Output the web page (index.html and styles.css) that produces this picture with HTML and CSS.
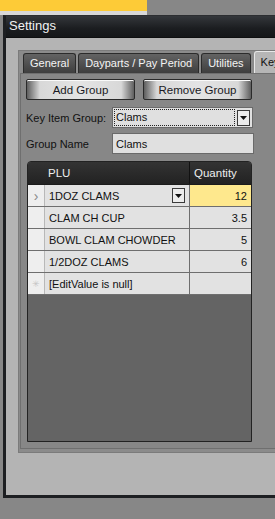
FILE: index.html
```html
<!DOCTYPE html>
<html lang="en">
<head>
    <meta charset="UTF-8">
    <title>Settings</title>
    <link rel="stylesheet" href="styles.css">
</head>
<body>
    <div class="topbar">
        <div class="topbar-yellow"></div>
    </div>

    <div class="window">
        <div class="title">Settings</div>
        <div class="window-body">
            <div class="tab-frame">
                <div class="tab-strip">
                    <div class="tab">General</div>
                    <div class="tab">Dayparts / Pay Period</div>
                    <div class="tab">Utilities</div>
                    <div class="tab active">Key Items</div>
                </div>
                <div class="tab-page">
                    <div class="button-row">
                        <button class="btn">Add Group</button>
                        <button class="btn">Remove Group</button>
                    </div>

                    <div class="field">
                        <label>Key Item Group:</label>
                        <div class="combo">
                            <span class="combo-text">Clams</span>
                            <span class="drop-btn"><svg width="7" height="4" viewBox="0 0 7 4"><path d="M0 0h7L3.5 4z" fill="#111"/></svg></span>
                        </div>
                    </div>

                    <div class="field">
                        <label>Group Name</label>
                        <div class="textbox">Clams</div>
                    </div>

                    <div class="grid">
                        <div class="grid-head">
                            <div class="cell ind"></div>
                            <div class="cell plu">PLU</div>
                            <div class="cell qty">Quantity</div>
                        </div>
                        <div class="grid-row">
                            <div class="cell ind">&#8250;</div>
                            <div class="cell plu">1DOZ CLAMS
                                <span class="drop-btn small"><svg width="7" height="4" viewBox="0 0 7 4"><path d="M0 0h7L3.5 4z" fill="#111"/></svg></span>
                            </div>
                            <div class="cell qty focus">12</div>
                        </div>
                        <div class="grid-row">
                            <div class="cell ind"></div>
                            <div class="cell plu">CLAM CH CUP</div>
                            <div class="cell qty">3.5</div>
                        </div>
                        <div class="grid-row">
                            <div class="cell ind"></div>
                            <div class="cell plu">BOWL CLAM CHOWDER</div>
                            <div class="cell qty">5</div>
                        </div>
                        <div class="grid-row">
                            <div class="cell ind"></div>
                            <div class="cell plu">1/2DOZ CLAMS</div>
                            <div class="cell qty">6</div>
                        </div>
                        <div class="grid-row new">
                            <div class="cell ind star">&#10035;</div>
                            <div class="cell plu">[EditValue is null]</div>
                            <div class="cell qty"></div>
                        </div>
                        <div class="grid-empty"></div>
                    </div>
                </div>
            </div>
        </div>
    </div>
</body>
</html>
```
FILE: styles.css
```css
body {
    margin: 0;
    width: 275px;
    height: 519px;
    overflow: hidden;
    background: #878787;
    font-family: 'Liberation Sans', Arial, sans-serif;
    font-size: 11px;
    color: #111;
}

.topbar {
    height: 15px;
    width: 147px;
    background: #d9d9d9;
}

.topbar-yellow {
    height: 11px;
    background: #fdcb37;
}

.window {
    margin-left: 3px;
    width: 400px;
    border: 3px solid #1d1f22;
    border-top: 1px solid #2c2e31;
    background: #b4b4b4;
}

.title {
    height: 21px;
    line-height: 20px;
    padding-left: 3px;
    font-size: 13px;
    color: #f2f2f2;
    background: linear-gradient(#34373b, #1b1d20 60%, #151719);
    border-bottom: 1px solid #0e0f10;
}

.window-body {
    padding: 12px 0 42px 12px;
}

.tab-frame {
    border: 1px solid #7b7b7b;
    border-right: none;
    background: #8b8b8b;
    padding: 2px 0 3px 1px;
}

.tab-strip {
    display: flex;
    gap: 2px;
    padding-left: 3px;
    height: 20px;
    align-items: flex-end;
}

.tab {
    height: 19px;
    line-height: 19px;
    padding: 0 6px;
    color: #f4f4f4;
    background: linear-gradient(#636363, #3e3e3e);
    border: 1px solid #2b2b2b;
    border-bottom: none;
    border-radius: 3px 3px 0 0;
    white-space: nowrap;
}

.tab.active {
    height: 21px;
    line-height: 20px;
    margin-left: 1px;
    color: #111;
    background: #b6b6b6;
    border-color: #e8e8e8;
}

.tab-page {
    border: 1px solid #6f6f6f;
    border-right: none;
    background: #878787;
    padding: 5px 0 6px 5px;
}

.button-row {
    display: flex;
    gap: 8px;
}

.btn {
    width: 109px;
    height: 21px;
    padding: 0;
    font-family: inherit;
    font-size: 11.5px;
    color: #1a1a24;
    border: 1px solid #2a2a2a;
    border-radius: 2px;
    background: linear-gradient(90deg, #5e5e5e, #d8d8d8 12%, #e4e4e4 50%, #d8d8d8 88%, #5e5e5e);
    box-shadow: inset 0 1px 0 #fafafa;
}

.field {
    display: flex;
    align-items: center;
    margin-top: 7px;
}

.field + .field {
    margin-top: 5px;
}

.field label {
    width: 86px;
    color: #111;
}

.combo, .textbox {
    width: 139px;
    height: 19px;
    border: 1px solid #6a6a6a;
    background: #e0e0e0;
    display: flex;
    align-items: center;
}

.combo-text {
    flex: 1;
    height: 15px;
    line-height: 15px;
    margin: 1px 2px 1px 1px;
    padding-left: 1px;
    border: 1px dotted #222;
}

.textbox {
    padding-left: 3px;
    width: 137px;
}

.drop-btn {
    width: 11px;
    height: 14px;
    margin-right: 2px;
    border: 1px solid #3a3a3a;
    background: #ececec;
    display: flex;
    align-items: center;
    justify-content: center;
}

.drop-btn.small {
    margin-left: auto;
    height: 13px;
}

.grid {
    margin-top: 7px;
    margin-left: 1px;
    width: 223px;
    height: 279px;
    border: 1px solid #222;
    border-radius: 4px 4px 0 0;
    background: #646464;
    display: flex;
    flex-direction: column;
    overflow: hidden;
}

.grid-head, .grid-row {
    display: flex;
}

.grid-head {
    height: 22px;
    background: linear-gradient(#333, #222);
    border-bottom: 1px solid #1b1b1b;
    color: #eee;
    font-size: 11.5px;
}

.cell {
    display: flex;
    align-items: center;
    padding: 0 4px;
    box-sizing: border-box;
}

.cell.ind {
    width: 16px;
    flex: none;
}

.cell.plu {
    width: 145px;
    flex: none;
}

.cell.qty {
    flex: 1;
    border-left: 1px solid #555;
}

.grid-head .cell.qty {
    border-left: 1px solid #111;
}

.grid-row {
    height: 21px;
    border-bottom: 1px solid #6e6e6e;
    background: #e2e2e2;
}

.grid-row .cell.ind {
    background: #eeeeee;
    color: #888;
    font-size: 14px;
    justify-content: center;
    padding: 0;
}

.grid-row .cell.plu {
    border-left: 1px solid #b8b8b8;
    padding-right: 2px;
}

.grid-row .cell.qty {
    justify-content: flex-end;
    border-left: 1px solid #6e6e6e;
}

.cell.focus {
    background: #fee88d;
}

.grid-row .cell.star {
    font-size: 9px;
    color: #c4c4c4;
}

.grid-empty {
    flex: 1;
}
```
